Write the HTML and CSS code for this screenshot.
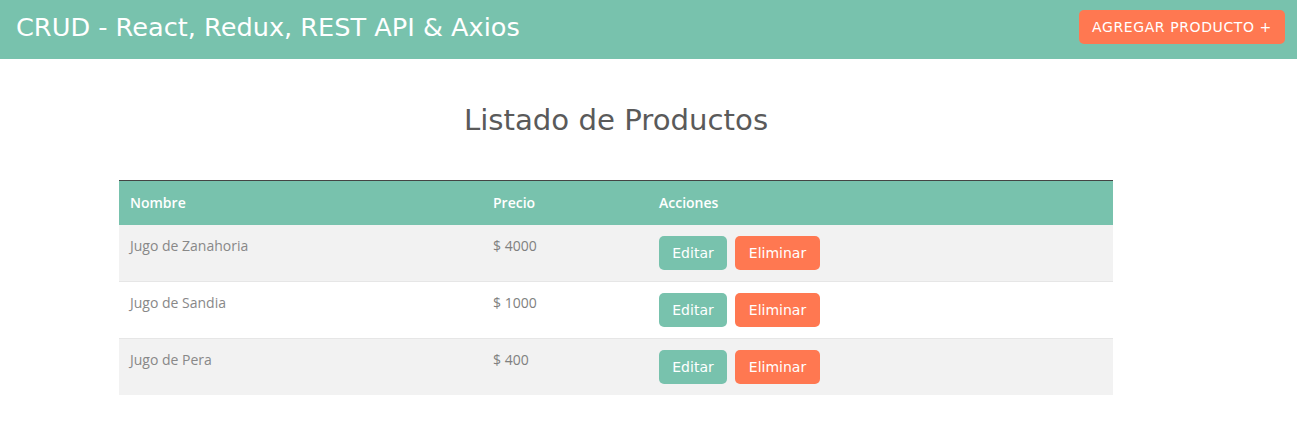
FILE: index.html
```html
<!DOCTYPE html>
<html lang="es">
<head>
<meta charset="utf-8">
<title>CRUD - React, Redux, REST API &amp; Axios</title>
<link rel="stylesheet" href="styles.css">
</head>
<body>
<nav class="navbar">
  <h1 class="brand">CRUD - React, Redux, REST API &amp; Axios</h1>
  <a class="btn btn-danger btn-add" href="#">Agregar Producto +</a>
</nav>
<main class="content">
  <h2 class="title">Listado de Productos</h2>
  <table class="table">
    <thead>
      <tr>
        <th class="col-name">Nombre</th>
        <th class="col-price">Precio</th>
        <th class="col-actions">Acciones</th>
      </tr>
    </thead>
    <tbody>
      <tr class="striped">
        <td>Jugo de Zanahoria</td>
        <td class="price">$ 4000</td>
        <td><div class="actions"><a class="btn btn-primary" href="#">Editar</a><button class="btn btn-danger">Eliminar</button></div></td>
      </tr>
      <tr>
        <td>Jugo de Sandia</td>
        <td class="price">$ 1000</td>
        <td><div class="actions"><a class="btn btn-primary" href="#">Editar</a><button class="btn btn-danger">Eliminar</button></div></td>
      </tr>
      <tr class="striped">
        <td>Jugo de Pera</td>
        <td class="price">$ 400</td>
        <td><div class="actions"><a class="btn btn-primary" href="#">Editar</a><button class="btn btn-danger">Eliminar</button></div></td>
      </tr>
    </tbody>
  </table>
</main>
</body>
</html>
```
FILE: styles.css
```css
* { box-sizing: border-box; }
body {
  margin: 0;
  background: #fff;
  color: #888;
  font-family: "Open Sans", "Noto Sans", sans-serif;
  font-size: 14px;
}
.navbar {
  height: 59px;
  background: #78c2ad;
  display: flex;
  align-items: center;
  justify-content: space-between;
  padding: 0 12px 0 16px;
}
.brand {
  margin: 0;
  font-family: "DejaVu Sans", sans-serif;
  font-weight: 400;
  font-size: 25.6px;
  color: #fff;
  line-height: 1;
  padding-bottom: 3px;
}
.btn {
  display: inline-flex;
  align-items: center;
  justify-content: center;
  height: 34px;
  padding: 0 10px;
  border: none;
  border-radius: 5px;
  color: #fff;
  text-decoration: none;
  font-family: "DejaVu Sans", sans-serif;
  font-size: 14px;
  cursor: pointer;
}
.btn-primary { background: #78c2ad; }
.btn-danger { background: #ff7851; }
.btn-add {
  width: 206px;
  text-transform: uppercase;
  margin-top: -6px;
  font-size: 14px;
  letter-spacing: 0.6px;
}
.content {
  width: 994px;
  margin-left: 119px;
}
.title {
  margin: 43px 0 42px;
  text-align: center;
  font-family: "DejaVu Sans", sans-serif;
  font-weight: 400;
  font-size: 29.2px;
  line-height: 36px;
  color: #5a5a5a;
}
.table {
  width: 100%;
  border-collapse: collapse;
  table-layout: fixed;
  border-top: 1px solid #444;
}
.col-name { width: 363px; }
.col-price { width: 166px; }
.table th {
  background: #78c2ad;
  color: #fff;
  font-weight: 600;
  text-align: left;
  height: 44px;
  padding: 0 11px;
  vertical-align: middle;
}
.table td {
  padding: 11px;
  vertical-align: top;
  border-top: 1px solid #e6e6e6;
  line-height: 20px;
}
.table tbody tr:first-child td { border-top: none; }
.table tr.striped td { background: #f2f2f2; }
.price { font-weight: 400; color: #808080; }
.actions { display: flex; gap: 8px; }
.actions .btn-primary { width: 68px; }
.actions .btn-danger { width: 85px; }
```
